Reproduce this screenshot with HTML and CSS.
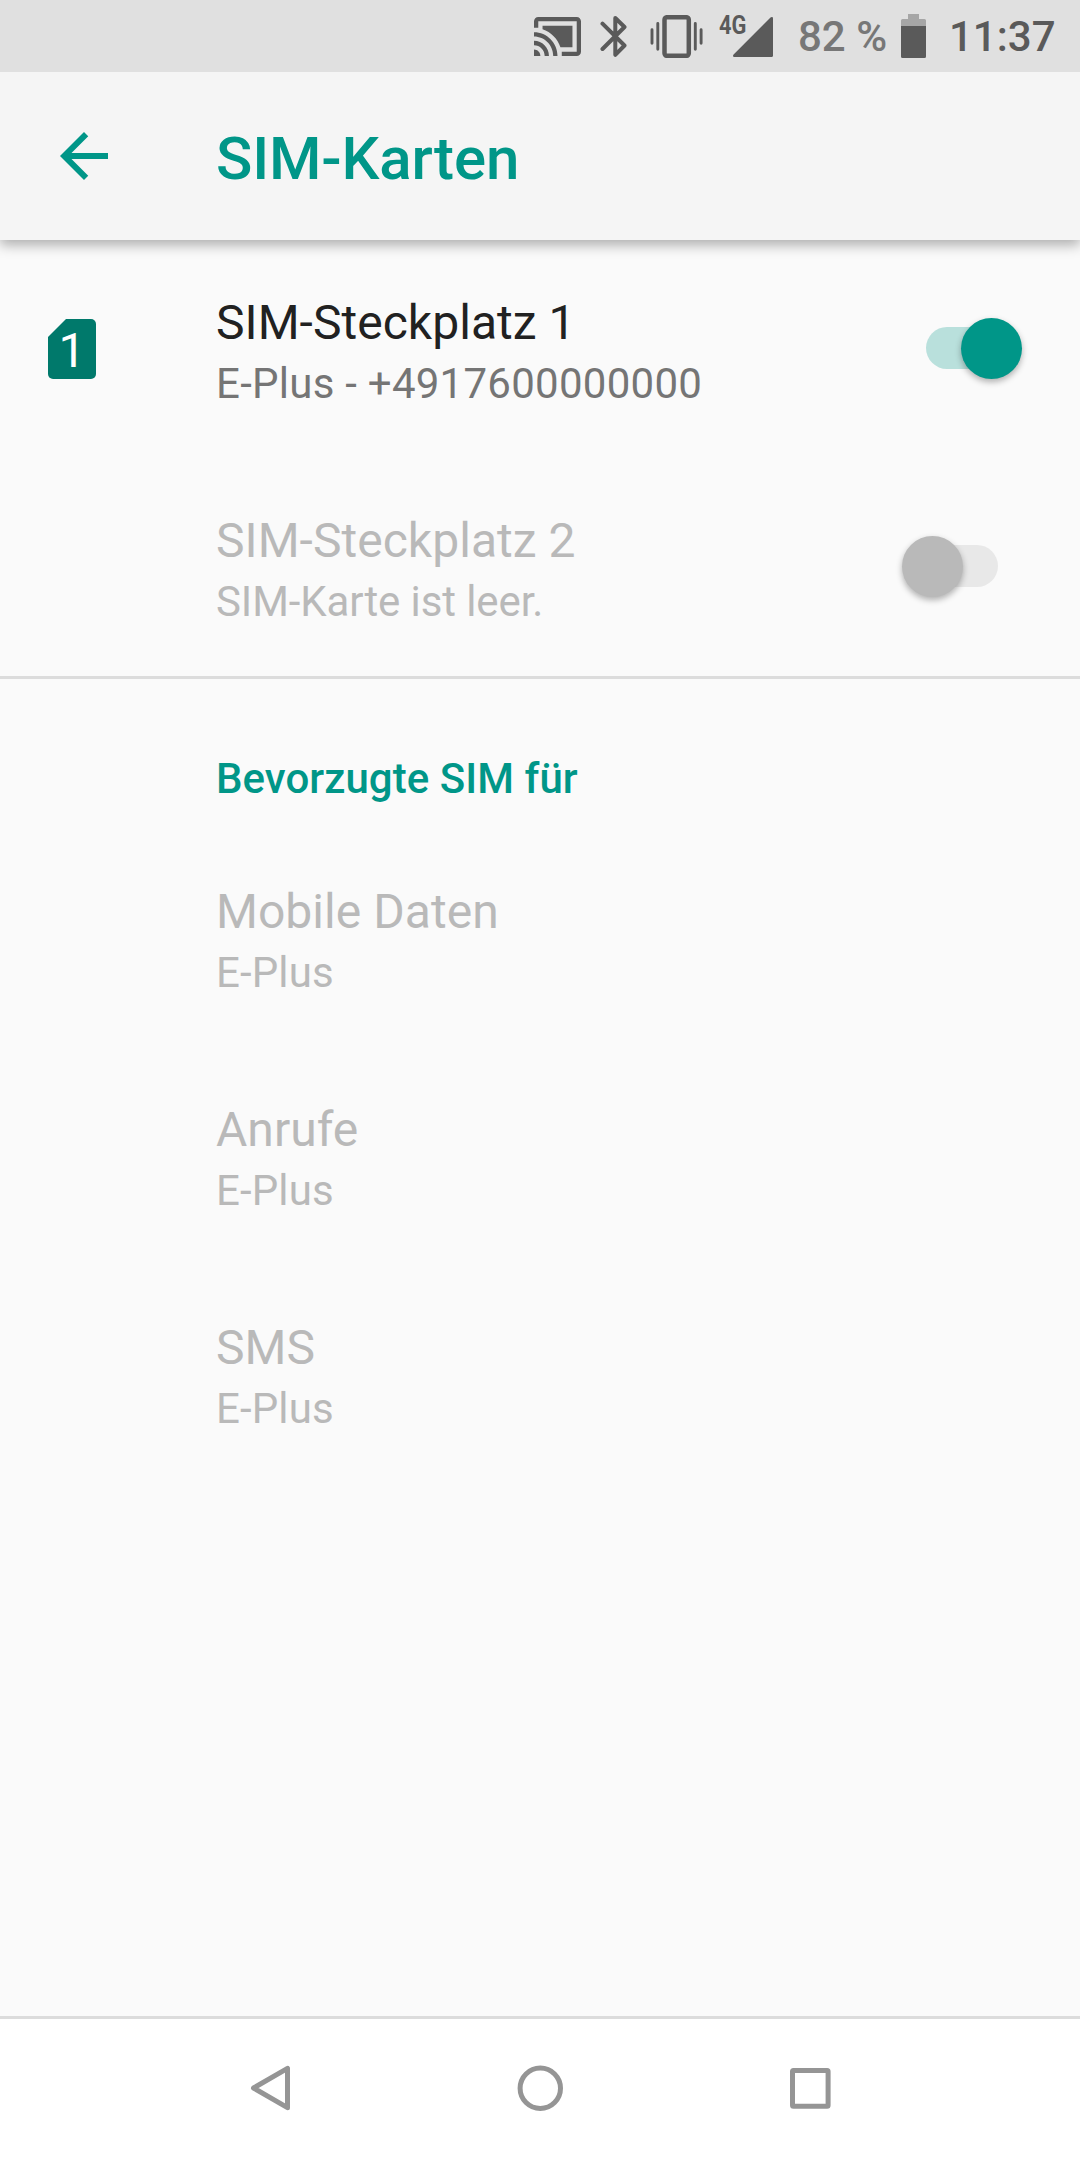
FILE: index.html
```html
<!DOCTYPE html>
<html lang="de">
<head>
<meta charset="utf-8">
<title>SIM-Karten</title>
<link rel="stylesheet" href="styles.css">
</head>
<body>
<div class="screen">
  <div class="status-bar">
    <svg class="cast" viewBox="1 3 22 18" preserveAspectRatio="none"><path d="M1 18v3h3c0-1.66-1.34-3-3-3zm0-4v2c2.76 0 5 2.24 5 5h2c0-3.87-3.13-7-7-7zm18-7H5v1.63c3.96 1.28 7.09 4.41 8.37 8.37H19V7zM1 10v2c4.97 0 9 4.03 9 9h2c0-6.08-4.93-11-11-11zm20-7H3c-1.1 0-2 .9-2 2v3h2V5h18v14h-7v2h7c1.1 0 2-.9 2-2V5c0-1.1-.9-2-2-2z"/></svg>
    <svg class="bluetooth" viewBox="0 0 27 43"><path d="M2.5 8.7 24.5 30.5 15.3 39.8V3L24.5 12 2.5 34"/></svg>
    <svg class="vibrate" viewBox="0 0 53 43"><rect x="14.5" y="2.2" width="24.3" height="38.6" rx="2.5"/><path d="M2 14.7v13.6M7.8 8.4v25.9M45.3 8.4v25.9M51.1 14.7v13.6"/></svg>
    <div class="signal">
      <span class="network">4G</span>
      <svg class="triangle" viewBox="0 0 40 40"><path d="M1.5 40H38.500a1.500 1.500 0 0 0 1.500-1.500V1.500C40 0 38.500-.4 37.500.6L.6 37.500C-.4 38.500 0 40 1.500 40z"/></svg>
    </div>
    <span class="percent">82 %</span>
    <svg class="battery" viewBox="0 0 25 44"><path class="empty" d="M7 0h11v5h5.500a1.500 1.500 0 0 1 1.500 1.500V12H0V6.500A1.500 1.500 0 0 1 1.500 5H7z"/><path d="M0 12h25v30.500a1.500 1.500 0 0 1-1.500 1.500h-22A1.500 1.500 0 0 1 0 42.500z"/></svg>
    <span class="clock">11:37</span>
  </div>

  <header class="toolbar">
    <svg class="back" viewBox="0 0 24 24"><path d="M20 11H7.830l5.590-5.590L12 4l-8 8 8 8 1.410-1.410L7.830 13H20v-2z"/></svg>
    <h1 class="heading">SIM-Karten</h1>
  </header>

  <main class="content">
    <section class="slots">
      <div class="row">
        <div class="lead">
          <svg class="sim" viewBox="0 0 48 60"><path d="M18 0H43a5 5 0 0 1 5 5V55a5 5 0 0 1-5 5H5a5 5 0 0 1-5-5V18z"/><text x="24" y="48" text-anchor="middle">1</text></svg>
        </div>
        <div class="label">
          <div class="title">SIM-Steckplatz 1</div>
          <div class="summary number">E-Plus - +4917600000000</div>
        </div>
        <div class="switch on"><span class="thumb"></span></div>
      </div>
      <div class="row disabled">
        <div class="lead"></div>
        <div class="label">
          <div class="title">SIM-Steckplatz 2</div>
          <div class="summary sentence">SIM-Karte ist leer.</div>
        </div>
        <div class="switch"><span class="thumb"></span></div>
      </div>
    </section>
    <section>
      <h2 class="category">Bevorzugte SIM für</h2>
      <div class="row disabled">
        <div class="lead"></div>
        <div class="label">
          <div class="title">Mobile Daten</div>
          <div class="summary">E-Plus</div>
        </div>
      </div>
      <div class="row disabled">
        <div class="lead"></div>
        <div class="label">
          <div class="title">Anrufe</div>
          <div class="summary">E-Plus</div>
        </div>
      </div>
      <div class="row disabled">
        <div class="lead"></div>
        <div class="label">
          <div class="title">SMS</div>
          <div class="summary">E-Plus</div>
        </div>
      </div>
    </section>
  </main>

  <nav class="nav-bar">
    <svg class="nav-icon" viewBox="0 0 60 60"><path d="M47.500 10.300V49.700L13.500 30z"/></svg>
    <svg class="nav-icon" viewBox="0 0 60 60"><circle cx="30.300" cy="30.300" r="20.200"/></svg>
    <svg class="nav-icon" viewBox="0 0 60 60"><rect x="12.500" y="12.600" width="35.600" height="35.600" rx="1"/></svg>
  </nav>
</div>
</body>
</html>
```
FILE: styles.css
```css
* {
  box-sizing: border-box;
}

body {
  margin: 0;
  font-family: Roboto, "Liberation Sans", sans-serif;
}

svg {
  display: block;
  flex: none;
}

.screen {
  display: flex;
  flex-direction: column;
  width: 1080px;
  height: 2160px;
  overflow: hidden;
  background: #fafafa;
}

/* Status bar */
.status-bar {
  display: flex;
  align-items: flex-start;
  flex: none;
  height: 72px;
  padding-left: 534px;
  background: #e0e0e0;
  fill: #5a5a5a;
  white-space: nowrap;
}

.cast {
  width: 47px;
  height: 39px;
  margin-top: 17px;
}

.bluetooth {
  width: 27px;
  height: 43px;
  margin: 15px 0 0 19px;
  fill: none;
  stroke: #5a5a5a;
  stroke-width: 4;
  stroke-linecap: round;
  stroke-linejoin: round;
}

.vibrate {
  width: 53px;
  height: 43px;
  margin: 15px 0 0 23px;
  fill: none;
  stroke: #5a5a5a;
  stroke-width: 4.5;
}

.vibrate path {
  stroke-width: 2.9;
  stroke-linecap: round;
}

.signal {
  position: relative;
  width: 53px;
  height: 42px;
  margin: 15px 0 0 17px;
}

.network {
  position: absolute;
  left: -1px;
  top: -5px;
  color: #5a5a5a;
  font: 700 26px/30px Roboto, sans-serif;
  transform: scaleX(0.84);
  transform-origin: 0 0;
}

.triangle {
  width: 40px;
  height: 40px;
  margin: 2px 0 0 13px;
}

.percent,
.clock {
  margin-top: 12px;
  font-size: 42px;
  font-weight: 500;
  line-height: 50px;
}

.percent {
  width: 103px;
  margin-left: 25px;
  color: #777;
}

.battery {
  width: 25px;
  height: 44px;
  margin-top: 14px;
}

.battery .empty {
  fill: #a6a6a6;
}

.clock {
  margin-left: 23px;
  color: #5a5a5a;
}

/* App bar */
.toolbar {
  position: relative;
  display: flex;
  align-items: center;
  flex: none;
  height: 168px;
  padding-left: 48px;
  background: #f5f5f5;
  box-shadow: 0 5px 12px rgba(0, 0, 0, 0.31);
  clip-path: inset(0 0 -30px 0);
  color: #009688;
}

.back {
  width: 72px;
  height: 72px;
  fill: #009688;
}

.heading {
  margin: 6px 0 0 96px;
  font-size: 60px;
  font-weight: 500;
  line-height: 70px;
  letter-spacing: -0.15px;
}

/* Preference list */
.content {
  flex: 1;
}

.slots {
  border-bottom: 3px solid #dcdcdc;
}

.row {
  display: flex;
  align-items: center;
  height: 218px;
  padding-right: 58px;
}

.lead {
  width: 216px;
  padding-left: 48px;
}

.sim {
  width: 48px;
  height: 60px;
  fill: #00796b;
}

.sim text {
  fill: #fff;
  font-size: 48px;
}

.label {
  flex: 1;
  height: 118px;
  padding-top: 4px;
}

.title {
  color: #212121;
  font-size: 48px;
  line-height: 57px;
  letter-spacing: 0.04px;
}

.summary {
  margin-top: 8px;
  color: #757575;
  font-size: 42px;
  line-height: 49px;
  letter-spacing: 0.12px;
}

.summary.number {
  letter-spacing: 0.26px;
}

.summary.sentence {
  letter-spacing: -0.1px;
}

.disabled .title,
.disabled .summary {
  color: #b9b9b9;
}

.category {
  height: 150px;
  margin: 0;
  padding: 75px 0 0 216px;
  color: #009688;
  font-size: 42px;
  font-weight: 500;
  line-height: 49px;
  letter-spacing: 0.06px;
}

.switch {
  position: relative;
  display: flex;
  align-items: center;
  width: 120px;
  height: 62px;
  margin-bottom: 2px;
}

.switch::before {
  content: "";
  width: 72px;
  height: 42px;
  margin-left: 24px;
  border-radius: 21px;
  background: #e8e8e8;
}

.thumb {
  position: absolute;
  left: 0;
  top: 1px;
  width: 61px;
  height: 61px;
  border-radius: 50%;
  background: #b9b9b9;
  box-shadow: 0 3px 6px rgba(0, 0, 0, 0.3);
}

.switch.on::before {
  background: #b9e0dc;
}

.switch.on .thumb {
  left: 59px;
  background: #009688;
}

/* System navigation */
.nav-bar {
  display: flex;
  justify-content: center;
  gap: 210px;
  flex: none;
  height: 144px;
  padding-top: 39px;
  border-top: 3px solid #dcdcdc;
  background: #fff;
}

.nav-icon {
  width: 60px;
  height: 60px;
  fill: none;
  stroke: #959595;
  stroke-width: 5;
  stroke-linejoin: round;
}
```
